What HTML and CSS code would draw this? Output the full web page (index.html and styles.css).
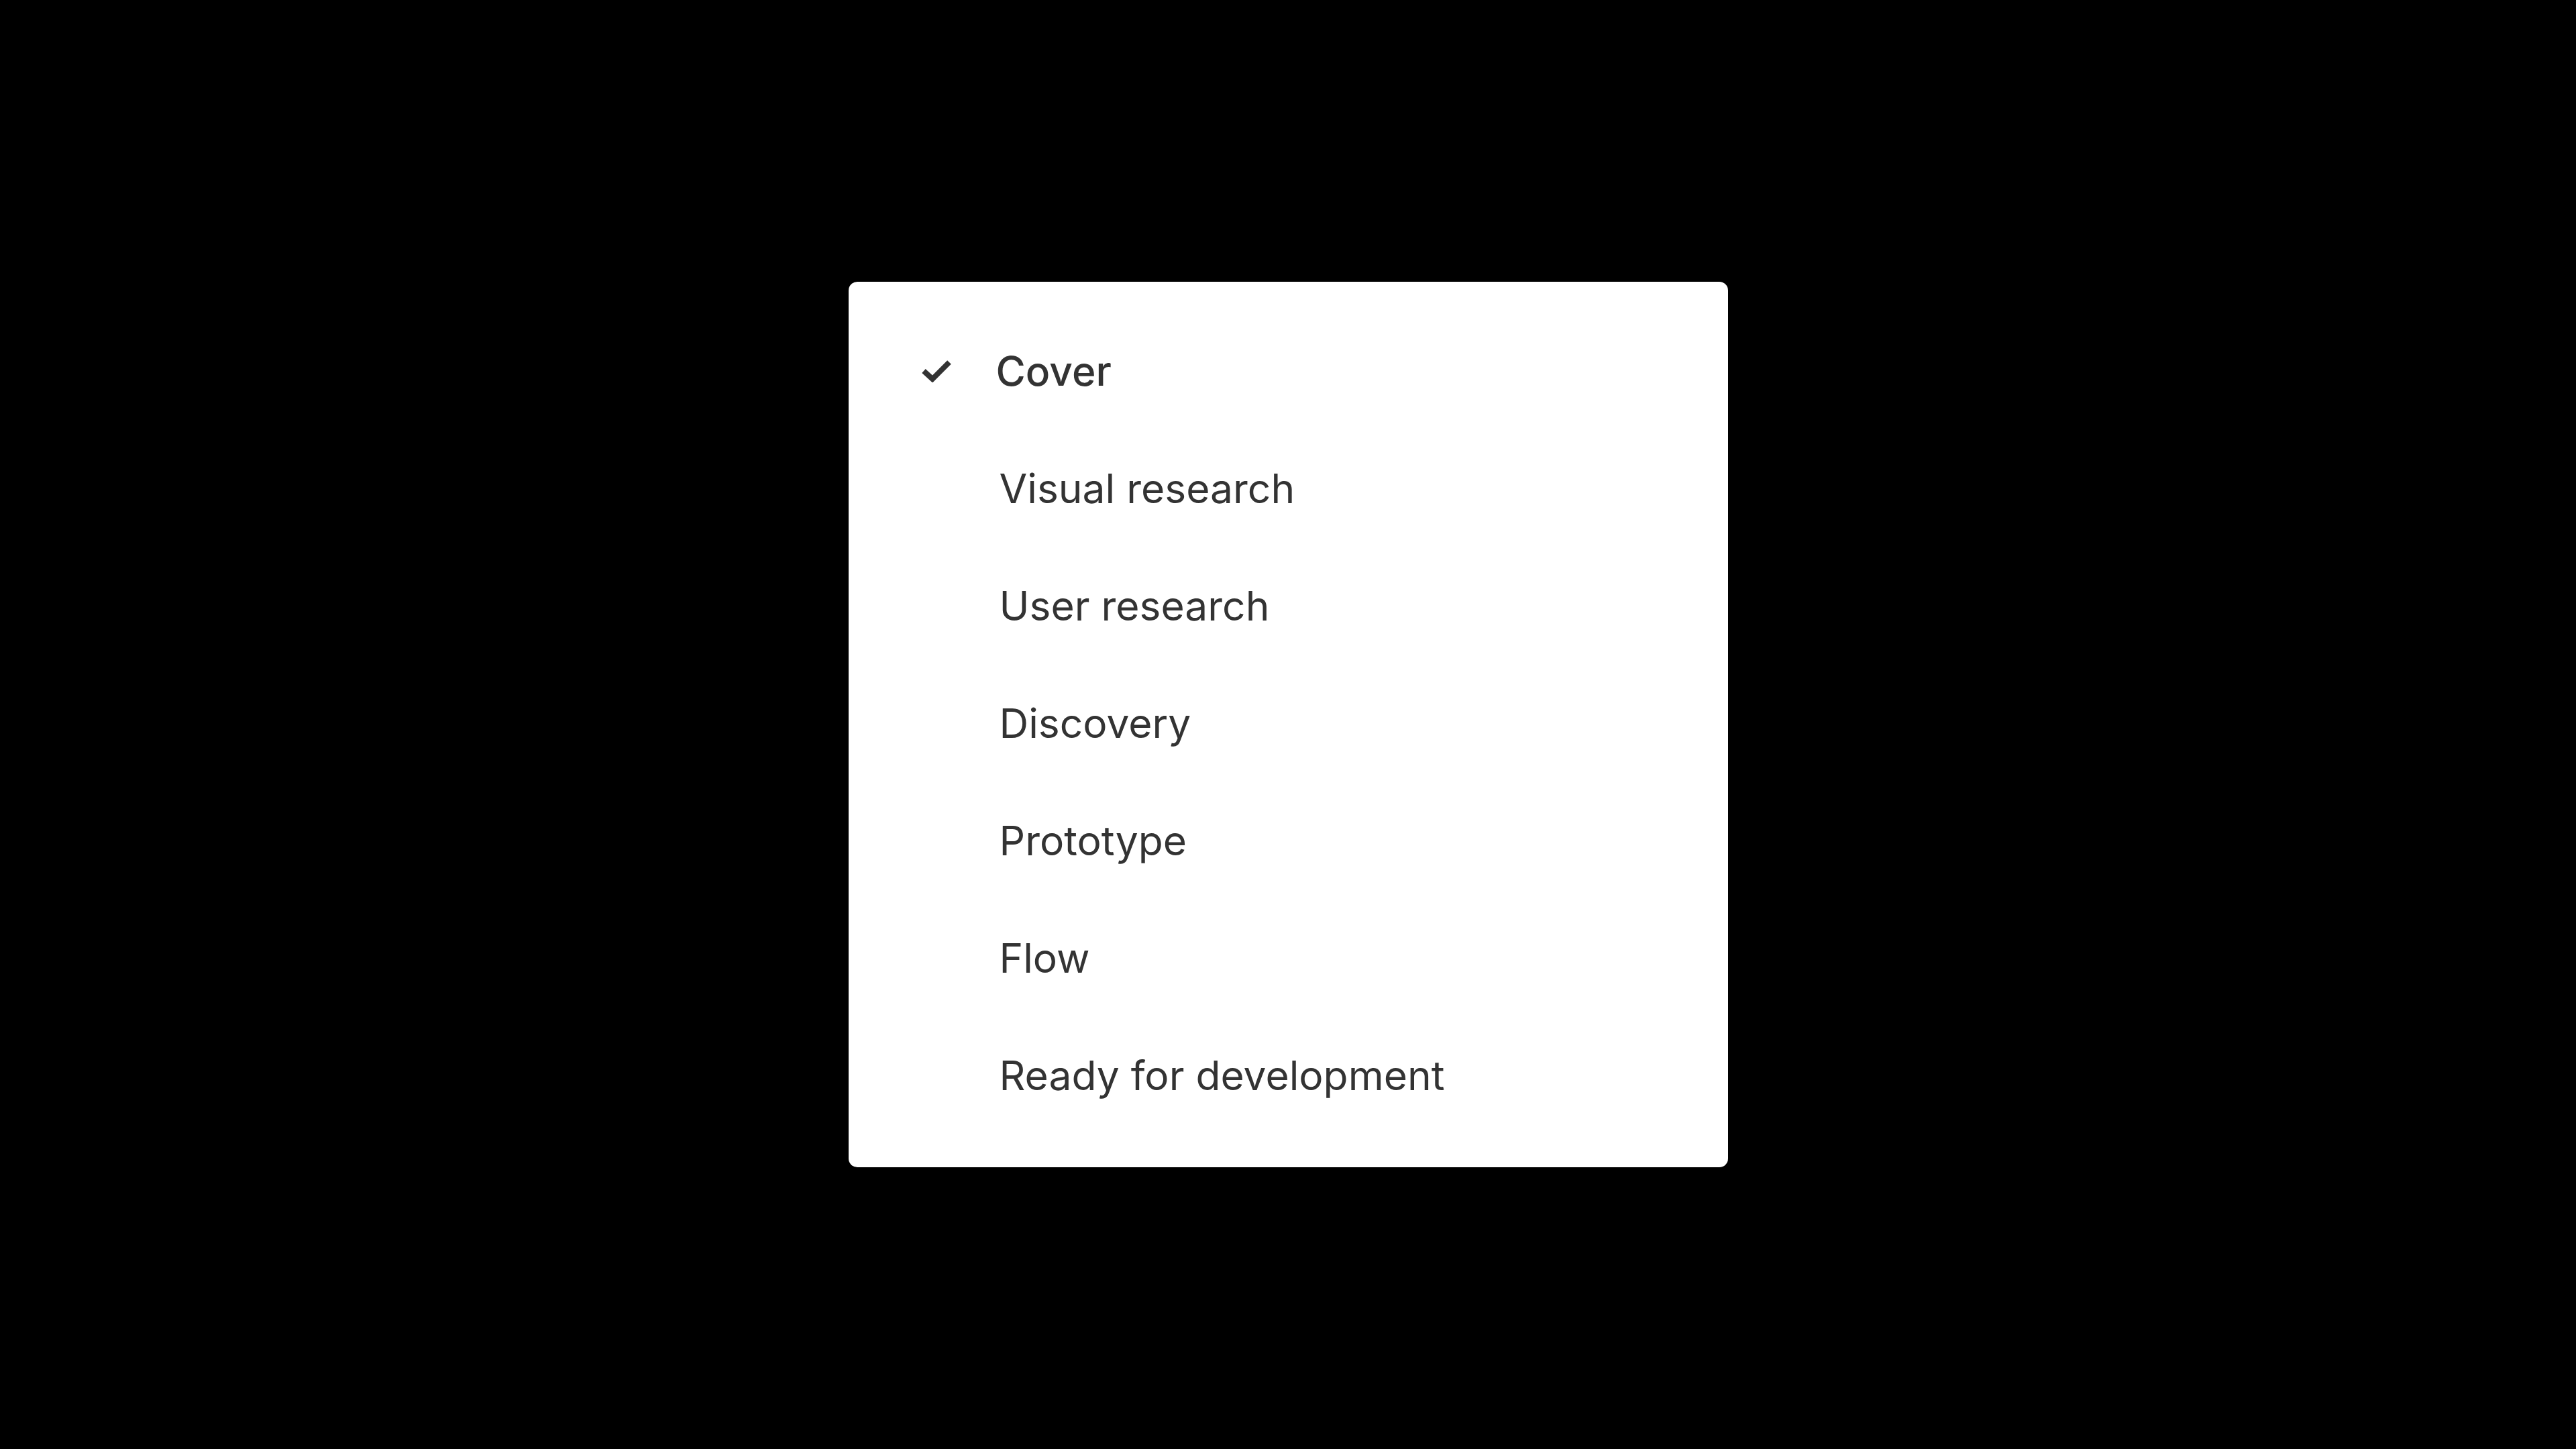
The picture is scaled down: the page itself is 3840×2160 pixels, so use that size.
FILE: index.html
```html
<!DOCTYPE html>
<html lang="en">
<head>
<meta charset="utf-8">
<title>Pages menu</title>
<link rel="stylesheet" href="styles.css">
</head>
<body>
<main class="stage">
  <ul class="menu">
    <li class="item selected">
      <span class="check">
        <svg viewBox="0 0 44 34" width="44" height="34" aria-hidden="true">
          <polyline points="3,17 16,29 41,4" fill="none" stroke="#333333" stroke-width="8" stroke-linejoin="miter" stroke-linecap="butt"/>
        </svg>
      </span>
      <span class="label">Cover</span>
    </li>
    <li class="item"><span class="check"></span><span class="label">Visual research</span></li>
    <li class="item"><span class="check"></span><span class="label">User research</span></li>
    <li class="item"><span class="check"></span><span class="label">Discovery</span></li>
    <li class="item"><span class="check"></span><span class="label">Prototype</span></li>
    <li class="item"><span class="check"></span><span class="label">Flow</span></li>
    <li class="item"><span class="check"></span><span class="label">Ready for development</span></li>
  </ul>
</main>
</body>
</html>
```
FILE: styles.css
```css
html, body {
  margin: 0;
  padding: 0;
  background: #000000;
}

.stage {
  width: 100vw;
  height: 100vh;
  display: flex;
  align-items: center;
  justify-content: center;
}

.menu {
  list-style: none;
  margin: 0;
  width: 1311px;
  box-sizing: border-box;
  padding: 45px 0 50px 0;
  background: #ffffff;
  border-radius: 13px;
  font-family: Inter, "Noto Sans", "Liberation Sans", sans-serif;
  color: #333333;
}

.item {
  height: 175px;
  display: flex;
  align-items: center;
  padding-left: 109px;
  font-size: 60.5px;
  font-weight: 400;
}

.check {
  width: 116px;
  flex: 0 0 116px;
  display: flex;
  align-items: center;
}

.check svg {
  display: block;
}

.selected .label {
  font-weight: 500;
  margin-left: -5px;
}
```
